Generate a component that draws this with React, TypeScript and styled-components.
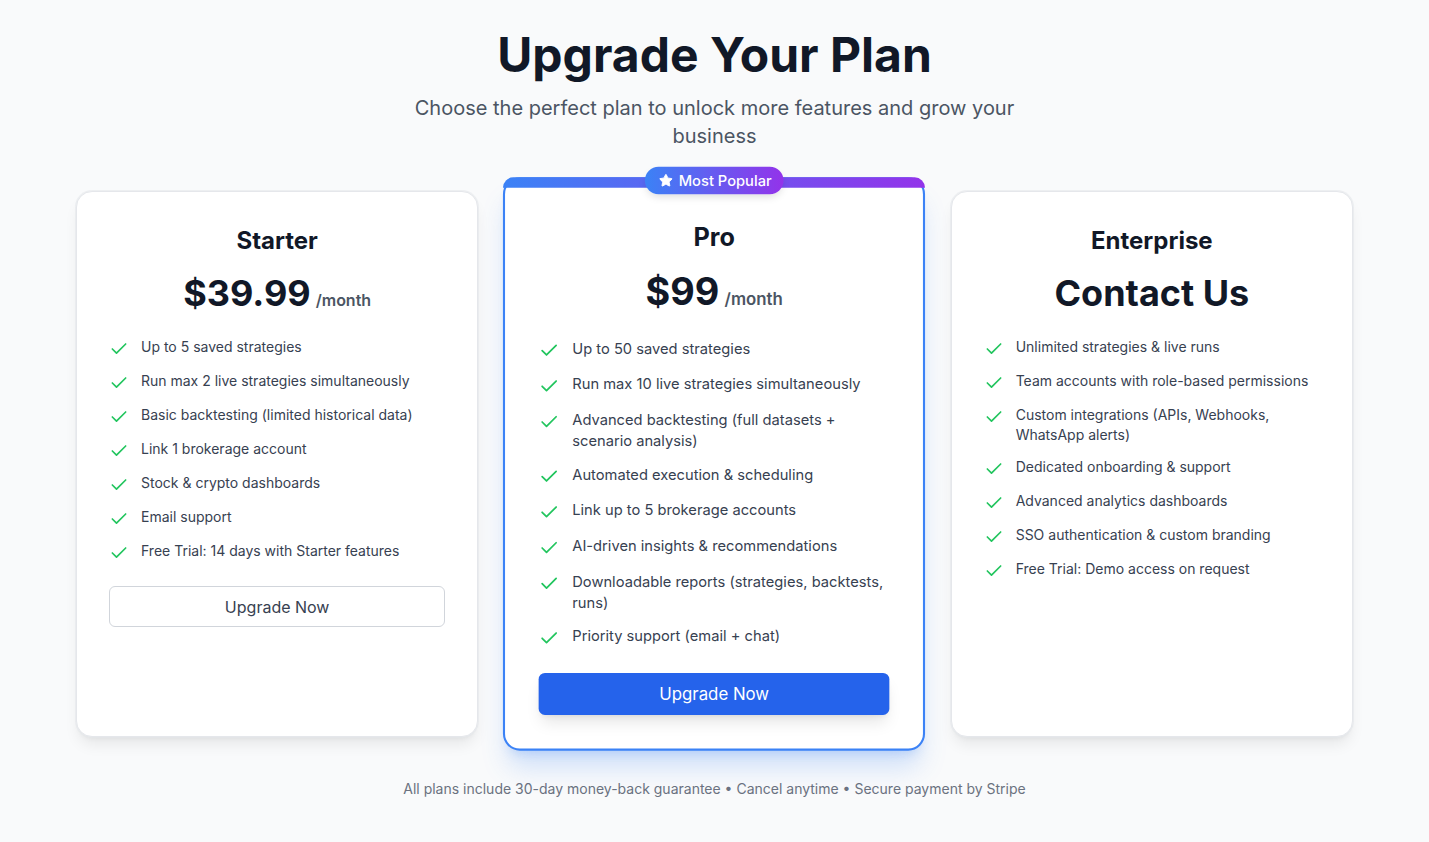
import React from "react";
import styled, { createGlobalStyle, css } from "styled-components";
import { Check, Star } from "lucide-react";

const GlobalStyle = createGlobalStyle`
  html, body {
    margin: 0;
    padding: 0;
    background: #f9fafb;
    font-family: Inter, "Noto Sans", "Liberation Sans", sans-serif;
    -webkit-font-smoothing: antialiased;
  }
  * { box-sizing: border-box; }
`;

const Page = styled.main`
  display: flex;
  flex-direction: column;
  align-items: center;
  padding: 31px 0 40px;
`;

const Header = styled.header`
  display: flex;
  flex-direction: column;
  align-items: center;
  text-align: center;
`;

const Title = styled.h1`
  margin: 0 0 15px;
  font-size: 48px;
  line-height: 48px;
  font-weight: 700;
  color: #111827;
`;

const Subtitle = styled.p`
  margin: 0;
  max-width: 672px;
  font-size: 20px;
  line-height: 28px;
  color: #4b5563;
`;

const Grid = styled.section`
  margin-top: 41px;
  width: 1277px;
  display: grid;
  grid-template-columns: repeat(3, 1fr);
  column-gap: 35px;
  align-items: stretch;
`;

const Card = styled.article<{ $featured?: boolean }>`
  position: relative;
  display: flex;
  flex-direction: column;
  background: #ffffff;
  border-radius: 16px;
  padding: 33px 32px 32px;
  border: 1px solid #e5e7eb;
  box-shadow: 0 0 0 1px rgba(229, 231, 235, 0.6), 0 10px 15px -3px rgba(0, 0, 0, 0.08),
    0 4px 6px -4px rgba(0, 0, 0, 0.08);
  ${(p) =>
    p.$featured &&
    css`
      padding-top: 39px;
      border: 2px solid #3b82f6;
      transform: scale(1.05);
      box-shadow: 0 20px 25px -5px rgba(59, 130, 246, 0.22), 0 8px 10px -6px rgba(59, 130, 246, 0.22);
      z-index: 1;
    `}
`;

const TopBar = styled.div`
  position: absolute;
  top: -2px;
  left: -2px;
  right: -2px;
  height: 10px;
  border-radius: 16px 16px 0 0;
  background: linear-gradient(90deg, #3b82f6, #9333ea);
`;

const Badge = styled.div`
  position: absolute;
  top: -12px;
  left: 50%;
  transform: translateX(-50%);
  display: flex;
  align-items: center;
  gap: 5px;
  padding: 3px 11px 3px 13px;
  border-radius: 999px;
  background: linear-gradient(90deg, #3b82f6, #9333ea);
  color: #ffffff;
  font-size: 14px;
  line-height: 20px;
  font-weight: 500;
  white-space: nowrap;
  box-shadow: 0 4px 8px -2px rgba(0, 0, 0, 0.15);
`;

const PlanName = styled.h2`
  margin: 0 0 15px;
  text-align: center;
  font-size: 24px;
  line-height: 32px;
  font-weight: 700;
  color: #111827;
`;

const PriceRow = styled.div`
  display: flex;
  justify-content: center;
  align-items: baseline;
  gap: 5px;
  height: 41px;
  margin-bottom: 24px;
`;

const Amount = styled.span`
  font-size: 36px;
  line-height: 42px;
  font-weight: 700;
  color: #111827;
`;

const Period = styled.span`
  font-size: 16px;
  line-height: 24px;
  font-weight: 600;
  color: #4b5563;
`;

const FeatureList = styled.ul`
  list-style: none;
  margin: 0 0 23px;
  padding: 0;
  display: flex;
  flex-direction: column;
  gap: 12px;
`;

const Feature = styled.li`
  display: flex;
  align-items: flex-start;
  gap: 12px;
  font-size: 14px;
  line-height: 20px;
  color: #374151;
`;

const CheckIcon = styled(Check)`
  flex-shrink: 0;
  margin-top: 2px;
  color: #22c55e;
`;

const Button = styled.button<{ $primary?: boolean }>`
  width: 100%;
  height: 41px;
  border-radius: 6px;
  font-family: inherit;
  font-size: 16px;
  line-height: 24px;
  font-weight: 400;
  cursor: pointer;
  ${(p) =>
    p.$primary
      ? css`
          border: none;
          height: 40px;
          background: #2563eb;
          color: #ffffff;
          box-shadow: 0 10px 15px -3px rgba(0, 0, 0, 0.1), 0 4px 6px -4px rgba(0, 0, 0, 0.1);
        `
      : css`
          border: 1px solid #d1d5db;
          background: #ffffff;
          color: #374151;
        `}
`;

const Footer = styled.p`
  margin: 42px 0 0;
  font-size: 14px;
  line-height: 20px;
  color: #6b7280;
  text-align: center;
`;

type Plan = {
  name: string;
  price?: string;
  contact?: boolean;
  featured?: boolean;
  features: string[];
  button?: boolean;
};

const plans: Plan[] = [
  {
    name: "Starter",
    price: "$39.99",
    button: true,
    features: [
      "Up to 5 saved strategies",
      "Run max 2 live strategies simultaneously",
      "Basic backtesting (limited historical data)",
      "Link 1 brokerage account",
      "Stock & crypto dashboards",
      "Email support",
      "Free Trial: 14 days with Starter features",
    ],
  },
  {
    name: "Pro",
    price: "$99",
    featured: true,
    button: true,
    features: [
      "Up to 50 saved strategies",
      "Run max 10 live strategies simultaneously",
      "Advanced backtesting (full datasets + scenario analysis)",
      "Automated execution & scheduling",
      "Link up to 5 brokerage accounts",
      "AI-driven insights & recommendations",
      "Downloadable reports (strategies, backtests, runs)",
      "Priority support (email + chat)",
    ],
  },
  {
    name: "Enterprise",
    contact: true,
    features: [
      "Unlimited strategies & live runs",
      "Team accounts with role-based permissions",
      "Custom integrations (APIs, Webhooks, WhatsApp alerts)",
      "Dedicated onboarding & support",
      "Advanced analytics dashboards",
      "SSO authentication & custom branding",
      "Free Trial: Demo access on request",
    ],
  },
];

export default function App() {
  return (
    <>
      <GlobalStyle />
      <Page>
        <Header>
          <Title>Upgrade Your Plan</Title>
          <Subtitle>
            Choose the perfect plan to unlock more features and grow your business
          </Subtitle>
        </Header>
        <Grid>
          {plans.map((plan) => (
            <Card key={plan.name} $featured={plan.featured}>
              {plan.featured && (
                <>
                  <TopBar />
                  <Badge>
                    <Star size={14} fill="#ffffff" strokeWidth={1.5} />
                    Most Popular
                  </Badge>
                </>
              )}
              <PlanName>{plan.name}</PlanName>
              <PriceRow>
                {plan.contact ? (
                  <Amount>Contact Us</Amount>
                ) : (
                  <>
                    <Amount>{plan.price}</Amount>
                    <Period>/month</Period>
                  </>
                )}
              </PriceRow>
              <FeatureList>
                {plan.features.map((f) => (
                  <Feature key={f}>
                    <CheckIcon size={20} strokeWidth={2} />
                    <span>{f}</span>
                  </Feature>
                ))}
              </FeatureList>
              {plan.button && <Button $primary={plan.featured}>Upgrade Now</Button>}
            </Card>
          ))}
        </Grid>
        <Footer>
          All plans include 30-day money-back guarantee • Cancel anytime • Secure payment by Stripe
        </Footer>
      </Page>
    </>
  );
}
